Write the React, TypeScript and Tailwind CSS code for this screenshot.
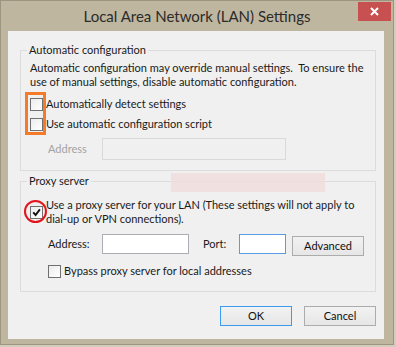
import React from "react";

const Check = ({ checked }: { checked?: boolean }) => (
  <span className="flex h-[13px] w-[13px] shrink-0 items-center justify-center border border-[#707070] bg-gradient-to-br from-[#ececec] to-white">
    {checked && (
      <svg width="9" height="9" viewBox="0 0 9 9">
        <path d="M1.2 4.4 L3.6 7 L7.9 1.4" fill="none" stroke="#111" strokeWidth="1.9" />
      </svg>
    )}
  </span>
);

const Btn = ({ label, def }: { label: string; def?: boolean }) => (
  <div
    className={`flex h-[20px] w-[72px] items-center justify-center border bg-gradient-to-b from-[#f2f2f2] to-[#e6e6e6] text-[#111] ${
      def ? "border-[#3c9bf0]" : "border-[#acacac]"
    }`}
  >
    {label}
  </div>
);

export default function App() {
  return (
    <div className="h-[347px] w-[396px] bg-[#d2ccbd] font-['Lato',sans-serif] text-[11px] leading-[14px] text-[#1a1a1a]">
      <div className="h-[345px] w-[394px] border border-[#9d957f] bg-[#bfb69f]">
        <div className="relative flex h-[30px] items-center justify-center">
          <span className="text-[15px] leading-[18px] text-[#2b2b2b]">Local Area Network (LAN) Settings</span>
          <div className="absolute right-[2px] top-[1px] flex h-[19px] w-[33px] items-center justify-center bg-[#c75050]">
            <svg width="9" height="9" viewBox="0 0 9 9">
              <path d="M1 1 L8 8 M8 1 L1 8" stroke="#fff" strokeWidth="2" />
            </svg>
          </div>
        </div>

        <div className="relative ml-[7px] h-[308px] w-[376px] bg-[#f0f0f0] pl-[12px] pr-[8px] pt-[12px]">
          <fieldset className="h-[128px] border border-[#dcdcdc] px-[9px]">
            <legend className="ml-[-3px] px-[2px]">Automatic configuration</legend>
            <p className="mt-[4px] whitespace-nowrap">
              Automatic configuration may override manual settings.&nbsp; To ensure the
              <br />
              use of manual settings, disable automatic configuration.
            </p>
            <div className="mt-[5px] flex h-[20px] items-center gap-[3px]">
              <Check />
              <span>Automatically detect settings</span>
            </div>
            <div className="flex h-[20px] items-center gap-[3px]">
              <Check />
              <span>Use automatic configuration script</span>
            </div>
            <div className="mt-[4px] flex items-center">
              <span className="w-[72px] pl-[18px] text-[#a3a3a3]">Address</span>
              <div className="h-[22px] w-[184px] border border-[#d9d9d9] bg-[#f0f0f0]" />
            </div>
          </fieldset>

          <fieldset className="mt-[3px] h-[118px] border border-[#dcdcdc] px-[9px]">
            <legend className="ml-[-3px] px-[2px]">Proxy server</legend>
            <div className="mt-[10px] flex items-center gap-[3px]">
              <Check checked />
              <span className="whitespace-nowrap">
                Use a proxy server for your LAN (These settings will not apply to
                <br />
                dial-up or VPN connections).
              </span>
            </div>
            <div className="mt-[8px] flex items-start pl-[18px]">
              <span className="w-[54px] leading-[20px]">Address:</span>
              <div className="h-[20px] w-[87px] border border-[#abadb3] bg-white" />
              <span className="ml-[14px] w-[36px] leading-[20px]">Port:</span>
              <div className="h-[20px] w-[47px] border border-[#569de5] bg-white" />
              <div className="ml-[6px] mt-[2px]">
                <Btn label="Advanced" />
              </div>
            </div>
            <div className="mt-[8px] flex items-center gap-[3px] pl-[18px]">
              <Check />
              <span>Bypass proxy server for local addresses</span>
            </div>
          </fieldset>

          <div className="mt-[14px] flex justify-end gap-[12px]">
            <Btn label="OK" def />
            <Btn label="Cancel" />
          </div>

          <div className="absolute left-[17px] top-[61px] h-[43px] w-[21px] border-[3px] border-[#f47b2a]" />
          <div className="absolute left-[163px] top-[142px] h-[19px] w-[154px] bg-[#f0dcdc]/80" />
          <div className="absolute left-[16px] top-[169px] h-[23px] w-[23px] rounded-full border-[2.5px] border-[#e3141b]" />
        </div>
      </div>
    </div>
  );
}
